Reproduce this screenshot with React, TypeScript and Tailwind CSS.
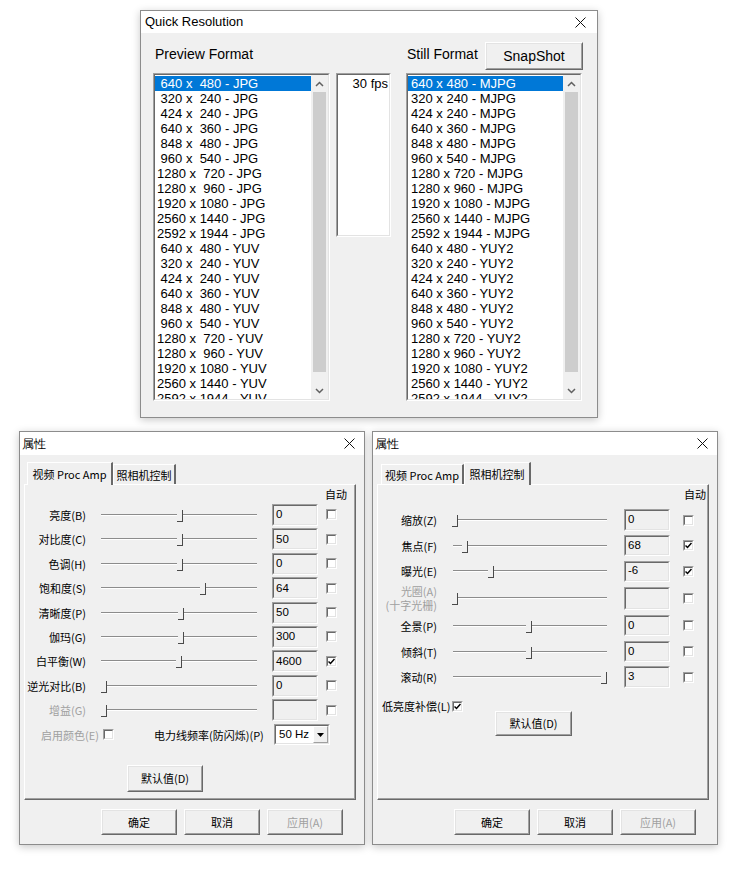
import React from "react";

const LAT = "font-['Liberation_Sans',Arial,sans-serif]";
const CJK = "font-['Noto_Sans_CJK_SC','Liberation_Sans',sans-serif]";

const sizes = [" 640 x  480", " 320 x  240", " 424 x  240", " 640 x  360", " 848 x  480", " 960 x  540", "1280 x  720", "1280 x  960", "1920 x 1080", "2560 x 1440", "2592 x 1944"];
const leftItems = [...sizes.map((s) => s + " - JPG"), ...sizes.map((s) => s + " - YUV")];
const rsizes = sizes.map((s) => s.trim().replace(/\s+/g, " "));
const rightItems = [...rsizes.map((s) => s + " - MJPG"), ...rsizes.map((s) => s + " - YUY2")];

function Sunken({ className = "", innerClass = "", children }: { className?: string; innerClass?: string; children?: React.ReactNode }) {
  return (
    <div className={"border border-t-[#a0a0a0] border-l-[#a0a0a0] border-r-white border-b-white " + className}>
      <div className={"w-full h-full border border-t-[#696969] border-l-[#696969] border-r-[#e3e3e3] border-b-[#e3e3e3] " + innerClass}>{children}</div>
    </div>
  );
}

function Button({ className = "", children, disabled }: { className?: string; children?: React.ReactNode; disabled?: boolean }) {
  return (
    <div className={"border border-t-white border-l-white border-r-[#696969] border-b-[#696969] bg-[#f0f0f0] " + className}>
      <div className={"w-full h-full flex items-center justify-center border border-t-[#e3e3e3] border-l-[#e3e3e3] border-r-[#a0a0a0] border-b-[#a0a0a0] " + (disabled ? "text-[#a0a0a0]" : "text-black")}>
        {children}
      </div>
    </div>
  );
}

function CloseX() {
  return (
    <svg width="11" height="11" viewBox="0 0 11 11">
      <path d="M0.5 0.5L10.5 10.5M10.5 0.5L0.5 10.5" stroke="#111" strokeWidth="1" fill="none" />
    </svg>
  );
}

function Scrollbar() {
  return (
    <div className="w-[17px] h-full bg-[#f0f0f0] flex flex-col shrink-0">
      <div className="h-[17px] flex items-center justify-center">
        <svg width="9" height="6" viewBox="0 0 9 6">
          <path d="M1 5L4.5 1.5L8 5" stroke="#606060" strokeWidth="1.5" fill="none" />
        </svg>
      </div>
      <div className="flex-1 px-[2px]">
        <div className="h-[280px] bg-[#cdcdcd]" />
      </div>
      <div className="h-[17px] flex items-center justify-center">
        <svg width="9" height="6" viewBox="0 0 9 6">
          <path d="M1 1L4.5 4.5L8 1" stroke="#606060" strokeWidth="1.5" fill="none" />
        </svg>
      </div>
    </div>
  );
}

function ListBox({ items, w, pad }: { items: string[]; w: string; pad: string }) {
  return (
    <Sunken className={"h-[328px] " + w} innerClass="bg-white flex overflow-hidden">
      <div className="flex-1 overflow-hidden pt-[1px]">
        {items.map((t, i) => (
          <div key={i} className={"h-[15px] leading-[15px] whitespace-pre text-[13px] " + pad + " " + (i === 0 ? "bg-[#0078d7] text-white" : "text-black")}>
            {t}
          </div>
        ))}
      </div>
      <Scrollbar />
    </Sunken>
  );
}

function Window({ title, className = "", titleClass = "", barClass = "", children }: { title: string; className?: string; titleClass?: string; barClass?: string; children?: React.ReactNode }) {
  return (
    <div className={"border border-[#8c8c8c] bg-[#f0f0f0] shadow-[0_2px_8px_rgba(0,0,0,0.22)] flex flex-col " + className}>
      <div className={"bg-white flex items-center justify-between " + barClass}>
        <span className={titleClass}>{title}</span>
        <CloseX />
      </div>
      {children}
    </div>
  );
}

function Slider({ w, pos }: { w: string; pos: number }) {
  return (
    <div className={"relative h-[14px] " + w}>
      <div className="absolute left-0 right-0 top-[6px] h-[2px] border-t border-t-[#8c8c8c] border-b border-b-white" />
      <div className="absolute top-[2px] w-[6px] h-[12px] bg-[#f0f0f0] border-r border-b border-[#4a4a4a]" style={{ left: pos - 6 }} />
    </div>
  );
}

function Check({ checked }: { checked?: boolean }) {
  return (
    <div className="w-[11px] h-[11px] border border-t-[#a0a0a0] border-l-[#a0a0a0] border-r-white border-b-white">
      <div className="w-full h-full border border-t-[#696969] border-l-[#696969] border-r-[#e3e3e3] border-b-[#e3e3e3] bg-white flex items-center justify-center">
        {checked && (
          <svg width="7" height="7" viewBox="0 0 7 7">
            <path d="M0.5 3.5L2.5 5.5L6.5 1" stroke="#000" strokeWidth="1.5" fill="none" />
          </svg>
        )}
      </div>
    </div>
  );
}

function Edit({ value, h }: { value: string; h: string }) {
  return (
    <Sunken className={"w-[46px] " + h} innerClass={"bg-[#f0f0f0] flex items-center pl-[2px] text-[11.5px] text-black " + LAT}>
      {value}
    </Sunken>
  );
}

function Tab({ label, selected, w }: { label: string; selected?: boolean; w: string }) {
  if (selected) {
    return (
      <div className={"relative z-10 -mb-px h-[23px] bg-[#f0f0f0] border-t border-l border-t-white border-l-white border-r-2 border-r-[#696969] flex items-center justify-center pb-[1px] " + w}>
        <span className="text-[11px] leading-[14px]">{label}</span>
      </div>
    );
  }
  return (
    <div className={"h-[20px] border-t border-l border-t-white border-l-white border-r-2 border-r-[#696969] flex items-center justify-center " + w}>
      <span className="text-[11px] leading-[14px]">{label}</span>
    </div>
  );
}

function Panel({ children }: { children?: React.ReactNode }) {
  return (
    <div className="ml-[4px] w-[332px] h-[316px] border border-t-white border-l-white border-r-[#696969] border-b-[#696969]">
      <div className="w-full h-full border-r border-b border-r-[#a0a0a0] border-b-[#a0a0a0] flex flex-col">{children}</div>
    </div>
  );
}

function BottomButtons() {
  return (
    <div className="mt-[9px] flex justify-end gap-[7px] pr-[21px] text-[11px]">
      <Button className="w-[76px] h-[26px]">确定</Button>
      <Button className="w-[76px] h-[26px]">取消</Button>
      <Button className="w-[76px] h-[26px]" disabled>
        应用(A)
      </Button>
    </div>
  );
}

type LRow = { label: string; pos: number; value: string; checked?: boolean; disabled?: boolean };

const leftRows: LRow[] = [
  { label: "亮度(B)", pos: 82, value: "0" },
  { label: "对比度(C)", pos: 82, value: "50" },
  { label: "色调(H)", pos: 82, value: "0" },
  { label: "饱和度(S)", pos: 105, value: "64" },
  { label: "清晰度(P)", pos: 83, value: "50" },
  { label: "伽玛(G)", pos: 83, value: "300" },
  { label: "白平衡(W)", pos: 81, value: "4600", checked: true },
  { label: "逆光对比(B)", pos: 6, value: "0" },
  { label: "增益(G)", pos: 6, value: "", disabled: true },
];

function LeftDialog() {
  return (
    <Window title="属性" className="w-[346px] h-[414px]" barClass="h-[23px] pl-[2px] pr-[9px]" titleClass="text-[12px] leading-[16px]">
      <div className={"flex flex-col text-black " + CJK}>
        <div className="pt-[7px] flex items-end h-[29px] pl-[7px]">
          <Tab label="视频 Proc Amp" selected w="w-[86px]" />
          <Tab label="照相机控制" w="w-[63px]" />
        </div>
        <Panel>
          <div className="h-[17.8px] pt-[2px] pl-[300px] text-[11px] leading-[14px]">自动</div>
          {leftRows.map((r, i) => (
            <div key={i} className="h-[24.4px] flex items-center">
              <div className={"w-[61px] text-right text-[11px] leading-[14px] whitespace-nowrap " + (r.disabled ? "text-[#a0a0a0]" : "text-black")}>{r.label}</div>
              <div className="ml-[15px]">
                <Slider w="w-[156px]" pos={r.pos} />
              </div>
              <div className="ml-[15px]">
                <Edit value={r.value} h="h-[22px]" />
              </div>
              <div className="ml-[8px]">
                <Check checked={r.checked} />
              </div>
            </div>
          ))}
          <div className="h-[24.4px] flex items-center">
            <div className="ml-[16px] w-[55px] text-[11px] leading-[14px] whitespace-nowrap text-[#a0a0a0]">启用颜色(E)</div>
            <div className="ml-[7px]">
              <Check />
            </div>
            <div className="ml-[40px] w-[120px] text-[11px] leading-[14px] whitespace-nowrap">电力线频率(防闪烁)(P)</div>
            <Sunken className="w-[56px] h-[21px]" innerClass="bg-white flex">
              <div className={"flex-1 flex items-center pl-[3px] text-[11.5px] " + LAT}>50 Hz</div>
              <div className="w-[15px] h-full border border-t-white border-l-white border-r-[#a0a0a0] border-b-[#a0a0a0] bg-[#f0f0f0] flex items-center justify-center">
                <svg width="7" height="4" viewBox="0 0 7 4">
                  <path d="M0 0H7L3.5 4Z" fill="#000" />
                </svg>
              </div>
            </Sunken>
          </div>
          <div className="mt-[18.2px] ml-[102px]">
            <Button className="w-[76px] h-[27px] text-[11px]">默认值(D)</Button>
          </div>
        </Panel>
        <BottomButtons />
      </div>
    </Window>
  );
}

type RRow = { label: React.ReactNode; pos: number; value: string; checked?: boolean; disabled?: boolean; h: string; eh: string };

const rightRows: RRow[] = [
  { label: "缩放(Z)", pos: 5, value: "0", h: "h-[25.5px]", eh: "h-[22px]" },
  { label: "焦点(F)", pos: 15, value: "68", checked: true, h: "h-[25.5px]", eh: "h-[21px]" },
  { label: "曝光(E)", pos: 41, value: "-6", checked: true, h: "h-[25.5px]", eh: "h-[21px]" },
  {
    label: (
      <>
        <div>光圈(A)</div>
        <div>(十字光栅)</div>
      </>
    ),
    pos: 5,
    value: "",
    disabled: true,
    h: "h-[29px]",
    eh: "h-[23px]",
  },
  { label: "全景(P)", pos: 79, value: "0", h: "h-[26px]", eh: "h-[21px]" },
  { label: "倾斜(T)", pos: 79, value: "0", h: "h-[25.5px]", eh: "h-[21px]" },
  { label: "滚动(R)", pos: 154, value: "3", h: "h-[25.5px]", eh: "h-[22px]" },
];

function RightDialog() {
  return (
    <Window title="属性" className="w-[346px] h-[414px]" barClass="h-[23px] pl-[2px] pr-[9px]" titleClass="text-[12px] leading-[16px]">
      <div className={"flex flex-col text-black " + CJK}>
        <div className="pt-[7px] flex items-end h-[29px] pl-[8px]">
          <Tab label="视频 Proc Amp" w="w-[83px]" />
          <Tab label="照相机控制" selected w="w-[67px]" />
        </div>
        <Panel>
          <div className="h-[22.25px] pt-[2px] pl-[306px] text-[11px] leading-[14px]">自动</div>
          {rightRows.map((r, i) => (
            <div key={i} className={"flex items-center " + r.h}>
              <div className={"w-[59px] text-right text-[11px] leading-[14px] whitespace-nowrap " + (r.disabled ? "text-[#a0a0a0]" : "text-black")}>{r.label}</div>
              <div className="ml-[16px]">
                <Slider w="w-[154px]" pos={r.pos} />
              </div>
              <div className="ml-[17px]">
                <Edit value={r.value} h={r.eh} />
              </div>
              <div className="ml-[13px]">
                <Check checked={r.checked} />
              </div>
            </div>
          ))}
          <div className="mt-[9.25px] h-[14px] flex items-center pl-[4px]">
            <div className="w-[66px] text-[11px] leading-[14px] whitespace-nowrap">低亮度补偿(L)</div>
            <div className="ml-[4px]">
              <Check checked />
            </div>
          </div>
          <div className="mt-[-2px] ml-[117px]">
            <Button className="w-[77px] h-[25px] text-[11px]">默认值(D)</Button>
          </div>
        </Panel>
        <BottomButtons />
      </div>
    </Window>
  );
}

function QuickResolution() {
  return (
    <Window title="Quick Resolution" className={"ml-[140px] w-[458px] h-[408px] " + LAT} barClass="h-[22px] pl-[4px] pr-[11px]" titleClass="text-[13px] leading-[16px] text-black">
      <div className="flex pl-[12px] text-black">
        <div className="w-[177px]">
          <div className="h-[40px] pl-[2px] pt-[12px] text-[14px] leading-[18px]">Preview Format</div>
          <ListBox items={leftItems} w="w-[177px]" pad="pl-[2px]" />
        </div>
        <div className="ml-[6px] pt-[40px]">
          <Sunken className="w-[55px] h-[164px]" innerClass="bg-white">
            <div className="pt-[1px] h-[16px] leading-[15px] text-[13px] text-right pr-[1px]">30 fps</div>
          </Sunken>
        </div>
        <div className="ml-[15px] w-[177px]">
          <div className="h-[40px] flex items-start">
            <div className="pl-[1px] pt-[12px] text-[14px] leading-[18px]">Still Format</div>
            <Button className="ml-auto mt-[9px] w-[98px] h-[28px] text-[14px]">SnapShot</Button>
          </div>
          <ListBox items={rightItems} w="w-[176px]" pad="pl-[3px]" />
        </div>
      </div>
    </Window>
  );
}

export default function App() {
  return (
    <div className="w-[741px] h-[876px] bg-white pt-[10px] overflow-hidden">
      <QuickResolution />
      <div className="mt-[13px] pl-[19px] flex gap-[7px]">
        <LeftDialog />
        <RightDialog />
      </div>
    </div>
  );
}
